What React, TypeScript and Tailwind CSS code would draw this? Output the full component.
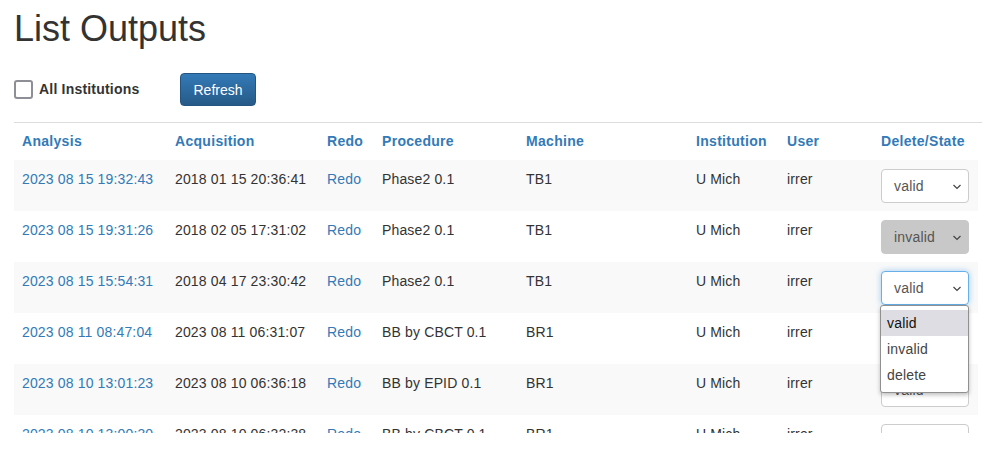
import React from "react";

const rows = [
  ["2023 08 15 19:32:43", "2018 01 15 20:36:41", "Phase2 0.1", "TB1", "valid"],
  ["2023 08 15 19:31:26", "2018 02 05 17:31:02", "Phase2 0.1", "TB1", "invalid"],
  ["2023 08 15 15:54:31", "2018 04 17 23:30:42", "Phase2 0.1", "TB1", "focus"],
  ["2023 08 11 08:47:04", "2023 08 11 06:31:07", "BB by CBCT 0.1", "BR1", "valid"],
  ["2023 08 10 13:01:23", "2023 08 10 06:36:18", "BB by EPID 0.1", "BR1", "valid"],
  ["2023 08 10 13:00:30", "2023 08 10 06:32:38", "BB by CBCT 0.1", "BR1", "valid"],
];

const widths = [153, 152, 55, 144, 170, 91, 94, 105];

function Chevron() {
  return (
    <svg width="10" height="6" viewBox="0 0 10 6" className="absolute right-[6px] top-[14px]">
      <path d="M1.5 1 L5 4.5 L8.5 1" fill="none" stroke="#444" strokeWidth="1.2" />
    </svg>
  );
}

function Select({ kind }: { kind: string }) {
  if (kind === "invalid") {
    return (
      <div className="relative w-[88px] h-[34px] rounded-[4px] border border-[#c8c8c8] bg-[#c8c8c8] text-[#555] pl-[12px] leading-[32px] tracking-[0.2px]">
        invalid
        <Chevron />
      </div>
    );
  }
  if (kind === "focus") {
    return (
      <div className="relative w-[88px] h-[34px] rounded-[4px] border border-[#66afe9] bg-white text-[#555] pl-[12px] leading-[32px] tracking-[0.2px] shadow-[0_0_6px_rgba(102,175,233,0.6)]">
        valid
        <Chevron />
        <div className="absolute left-[-2px] top-[33px] w-[89px] h-[88px] z-10 rounded-[3px] border border-[#909090] bg-white shadow-[0_2px_4px_rgba(0,0,0,0.25)] pt-[4px] text-[#333] leading-[26px]">
          <div className="bg-[#dedde3] text-[#111] pl-[6px] h-[26px]">valid</div>
          <div className="pl-[6px] h-[26px] text-[#444]">invalid</div>
          <div className="pl-[6px] h-[26px] text-[#444]">delete</div>
        </div>
      </div>
    );
  }
  return (
    <div className="relative w-[88px] h-[34px] rounded-[4px] border border-[#ccc] bg-white text-[#555] pl-[12px] leading-[32px] tracking-[0.2px]">
      valid
      <Chevron />
    </div>
  );
}

export default function App() {
  const headers = ["Analysis", "Acquisition", "Redo", "Procedure", "Machine", "Institution", "User", "Delete/State"];
  const td = "align-top px-[8px] pt-[9px] pb-[8px] leading-[20px] tracking-[0.15px] whitespace-nowrap";
  return (
    <div
      className="w-[996px] h-[453px] bg-white px-[14px] text-[14px] text-[#333] overflow-hidden"
      style={{ fontFamily: '"Liberation Sans", Arial, Helvetica, sans-serif' }}
    >
      <h1 className="pt-[9px] text-[36px] leading-[40px] font-normal text-[#333]">List Outputs</h1>
      <div className="mt-[24px] h-[33px] flex items-center">
        <div className="w-[166px] flex items-center">
          <div className="w-[19px] h-[19px] rounded-[3px] border-2 border-[#8e8e96] bg-white" />
          <span className="ml-[6px] font-bold text-[#333] leading-[20px] -mt-[2px] tracking-[0.2px]">All Institutions</span>
        </div>
        <button className="w-[76px] h-[33px] rounded-[4px] border border-[#245580] bg-gradient-to-b from-[#337ab7] to-[#265a88] text-white text-[14px] leading-[20px]">
          Refresh
        </button>
      </div>
      <div className="mt-[16px] border-t border-[#dddddd] h-[311px] overflow-hidden">
        <table className="table-fixed border-collapse w-[964px]">
          <colgroup>
            {widths.map((w, i) => (
              <col key={i} style={{ width: w }} />
            ))}
          </colgroup>
          <thead>
            <tr className="h-[37px]">
              {headers.map((h) => (
                <th key={h} className="text-left align-top px-[8px] pt-[8px] pb-[9px] font-bold text-[#337ab7] leading-[20px] tracking-[0.3px] whitespace-nowrap">
                  {h}
                </th>
              ))}
            </tr>
          </thead>
          <tbody>
            {rows.map((r, i) => (
              <tr key={i} className={i % 2 === 0 ? "bg-[#f9f9f9]" : "bg-white"}>
                <td className={`${td} h-[51px] text-[#337ab7]`}>{r[0]}</td>
                <td className={td}>{r[1]}</td>
                <td className={`${td} text-[#337ab7]`}>Redo</td>
                <td className={td}>{r[2]}</td>
                <td className={td}>{r[3]}</td>
                <td className={td}>U Mich</td>
                <td className={td}>irrer</td>
                <td className={td}>
                  <Select kind={r[4]} />
                </td>
              </tr>
            ))}
          </tbody>
        </table>
      </div>
    </div>
  );
}
